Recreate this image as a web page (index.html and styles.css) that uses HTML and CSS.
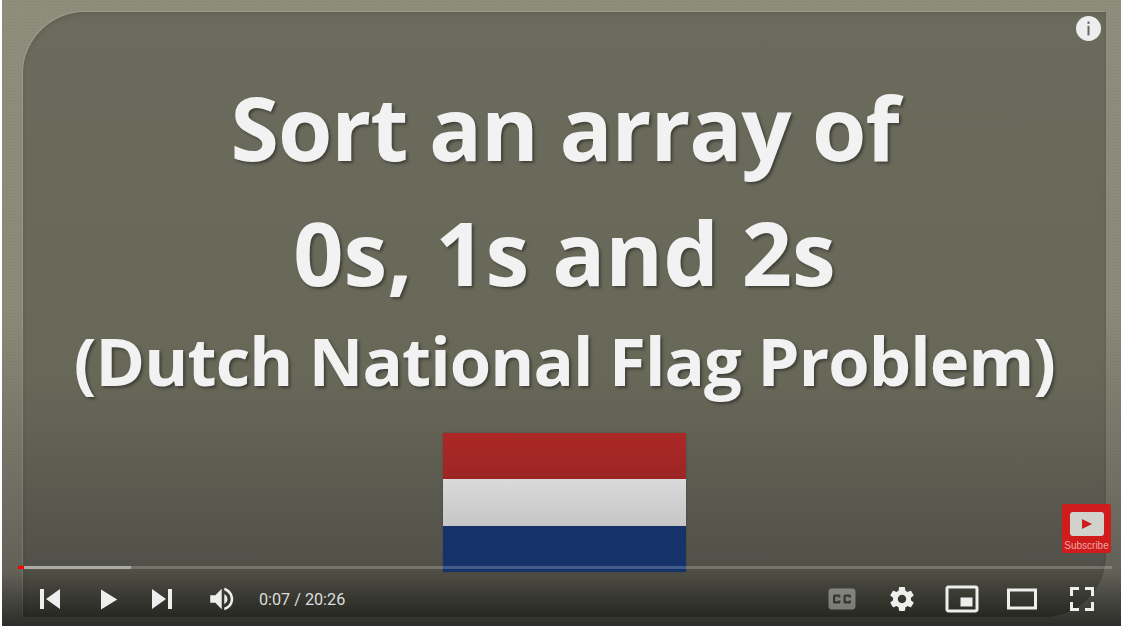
FILE: index.html
```html
<!DOCTYPE html>
<html lang="en">
<head>
    <meta charset="UTF-8">
    <meta name="viewport" content="width=device-width, initial-scale=1.0">
    <title>Sort an array of 0s, 1s and 2s</title>
    <link rel="stylesheet" href="styles.css">
</head>
<body>
    <div class="player">
        <div class="slide">
            <h1 class="slide-title first-line">Sort an array of</h1>
            <h1 class="slide-title">0s, 1s and 2s</h1>
            <h2 class="slide-subtitle">(Dutch National Flag Problem)</h2>
            <div class="flag">
                <div class="flag-red"></div>
                <div class="flag-white"></div>
                <div class="flag-blue"></div>
            </div>
        </div>

        <div class="shade"></div>

        <div class="info-button">
            <svg viewBox="0 0 25 25" width="25" height="25">
                <circle cx="12.5" cy="12.5" r="12.5" fill="#eee"/>
                <rect x="11.5" y="5.5" width="2" height="2.4" fill="#666"/>
                <rect x="11.5" y="9.8" width="2" height="9.6" fill="#666"/>
            </svg>
        </div>

        <div class="subscribe">
            <div class="subscribe-logo">
                <svg viewBox="0 0 10 10" width="10" height="10"><path d="M0 0 L10 5 L0 10 Z" fill="#d01c1c"/></svg>
            </div>
            <span class="subscribe-text">Subscribe</span>
        </div>

        <div class="controls">
            <div class="progress">
                <div class="progress-loaded"></div>
                <div class="progress-played"></div>
            </div>
            <div class="control-row">
                <div class="control-left">
                    <button class="prev-button"><svg viewBox="0 0 36 36"><path d="M12 12h2.4v12h-2.4z M15.6 18l8.4 6V12z"/></svg></button>
                    <button class="play-button"><svg viewBox="0 0 36 36"><path d="M12 26 L18.5 22 L18.5 14 L12 10 Z M18.5 22 L25 18 L18.5 14 Z"/></svg></button>
                    <button class="next-button"><svg viewBox="0 0 36 36"><path d="M12 24 L20.4 18 L12 12 V24 Z M21.6 12 v12 h2.4 V12 h-2.4 Z"/></svg></button>
                    <button class="volume-button"><svg viewBox="0 0 36 36"><path d="M8,21 L12,21 L17,26 L17,10 L12,15 L8,15 L8,21 Z M19,14 L19,22 C20.48,21.32 21.5,19.77 21.5,18 C21.5,16.26 20.48,14.74 19,14 Z M19,11.29 C21.89,12.15 24,14.83 24,18 C24,21.17 21.89,23.85 19,24.71 L19,26.77 C23.01,25.86 26,22.28 26,18 C26,13.72 23.01,10.14 19,9.23 L19,11.29 Z"/></svg></button>
                    <span class="time">0:07 / 20:26</span>
                </div>
                <div class="control-right">
                    <button class="small-button"><svg viewBox="0 0 36 36"><path fill-opacity="0.4" d="M11,11 C9.89,11 9,11.9 9,13 L9,23 C9,24.1 9.89,25 11,25 L25,25 C26.1,25 27,24.1 27,23 L27,13 C27,11.9 26.1,11 25,11 L11,11 Z M17,17 L15.5,17 L15.5,16.5 L13.5,16.5 L13.5,19.5 L15.5,19.5 L15.5,19 L17,19 L17,20 C17,20.55 16.55,21 16,21 L13,21 C12.45,21 12,20.55 12,20 L12,16 C12,15.45 12.45,15 13,15 L16,15 C16.55,15 17,15.45 17,16 L17,17 Z M24,17 L22.5,17 L22.5,16.5 L20.5,16.5 L20.5,19.5 L22.5,19.5 L22.5,19 L24,19 L24,20 C24,20.55 23.55,21 23,21 L20,21 C19.45,21 19,20.55 19,20 L19,16 C19,15.45 19.45,15 20,15 L23,15 C23.55,15 24,15.45 24,16 L24,17 Z"/></svg></button>
                    <button class="small-button"><svg viewBox="0 0 36 36"><path d="m 23.94,18.78 c .03,-0.25 .05,-0.51 .05,-0.78 0,-0.27 -0.02,-0.52 -0.05,-0.78 l 1.68,-1.32 c .15,-0.12 .19,-0.33 .09,-0.51 l -1.6,-2.76 c -0.09,-0.17 -0.31,-0.24 -0.48,-0.17 l -1.99,.8 c -0.41,-0.32 -0.86,-0.58 -1.35,-0.78 l -0.30,-2.12 c -0.02,-0.19 -0.19,-0.33 -0.39,-0.33 l -3.2,0 c -0.2,0 -0.36,.14 -0.39,.33 l -0.30,2.12 c -0.48,.2 -0.93,.47 -1.35,.78 l -1.99,-0.8 c -0.18,-0.07 -0.39,0 -0.48,.17 l -1.6,2.76 c -0.10,.17 -0.05,.39 .09,.51 l 1.68,1.32 c -0.03,.25 -0.05,.52 -0.05,.78 0,.26 .02,.52 .05,.78 l -1.68,1.32 c -0.15,.12 -0.19,.33 -0.09,.51 l 1.6,2.76 c .09,.17 .31,.24 .48,.17 l 1.99,-0.8 c .41,.32 .86,.58 1.35,.78 l .30,2.12 c .02,.19 .19,.33 .39,.33 l 3.2,0 c .2,0 .36,-0.14 .39,-0.33 l .30,-2.12 c .48,-0.2 .93,-0.47 1.35,-0.78 l 1.99,.8 c .18,.07 .39,0 .48,-0.17 l 1.6,-2.76 c .09,-0.17 .05,-0.39 -0.09,-0.51 l -1.68,-1.32 0,0 z m -5.94,2.01 c -1.54,0 -2.8,-1.25 -2.8,-2.8 0,-1.54 1.25,-2.8 2.8,-2.8 1.54,0 2.8,1.25 2.8,2.8 0,1.54 -1.25,2.8 -2.8,2.8 l 0,0 z"/></svg></button>
                    <button class="small-button"><svg viewBox="0 0 36 36"><path d="M25,17 L17,17 L17,23 L25,23 L25,17 Z M29,25 L29,10.98 C29,9.88 28.1,9 27,9 L9,9 C7.9,9 7,9.88 7,10.98 L7,25 C7,26.1 7.9,27 9,27 L27,27 C28.1,27 29,26.1 29,25 Z M27,25.02 L9,25.02 L9,10.97 L27,10.97 L27,25.02 Z"/></svg></button>
                    <button class="small-button"><svg viewBox="0 0 36 36"><path fill-rule="evenodd" d="m 28,11 0,14 -20,0 0,-14 z m -18,2 16,0 0,10 -16,0 0,-10 z"/></svg></button>
                    <button class="small-button"><svg viewBox="0 0 36 36"><path d="m 10,16 2,0 0,-4 4,0 0,-2 L 10,10 z M 20,10 l 0,2 4,0 0,4 2,0 L 26,10 z M 24,24 l -4,0 0,2 L 26,26 l 0,-6 -2,0 z M 12,20 L 10,20 L 10,26 l 6,0 0,-2 -4,0 z"/></svg></button>
                </div>
            </div>
        </div>
    </div>
</body>
</html>
```

FILE: styles.css
```css
html, body {
    margin: 0;
    height: 100%;
    background: #fff;
    overflow: hidden;
}
body {
    padding-left: 2px;
    box-sizing: border-box;
}
.player {
    position: relative;
    height: 626px;
    box-sizing: border-box;
    padding: 12px 15px 9px 21px;
    background-color: #8c8c7a;
    background-image: radial-gradient(rgba(0,0,0,0.06) 35%, transparent 40%), linear-gradient(#8e8e7c 0, #8a8a78 50%, #63635a 90%, #63635a 100%);
    background-size: 3px 3px, 100% 100%;
    overflow: hidden;
}
.slide {
    height: 100%;
    box-sizing: border-box;
    padding-top: 53px;
    background: linear-gradient(#6b6b5d 0, #686859 60%, #52524a 90%, #4a4a40 100%);
    border-radius: 62px 0 62px 0;
    box-shadow: -1px -1px 1px rgba(255,255,255,0.12), inset 0 2px 4px rgba(0,0,0,0.12);
    display: flex;
    flex-direction: column;
    align-items: center;
    font-family: "Open Sans", sans-serif;
    color: #f2f2f2;
    text-shadow: 2px 2px 3px rgba(0,0,0,0.4);
}
.slide-title {
    margin: 0;
    font-size: 88px;
    line-height: 125px;
    font-weight: 700;
}
.first-line {
    letter-spacing: -1.1px;
}
.slide-subtitle {
    margin: 0;
    font-size: 67px;
    line-height: 91px;
    font-weight: 700;
    letter-spacing: -0.9px;
}
.flag {
    width: 243px;
    margin-top: 27px;
    box-shadow: 0 0 2px rgba(0,0,0,0.2);
}
.flag-red {
    height: 46px;
    background: linear-gradient(#ac2827, #9c2524);
}
.flag-white {
    height: 47px;
    background: linear-gradient(#dadada, #c6c6c6);
}
.flag-blue {
    height: 46px;
    background: #15336a;
}
.shade {
    position: absolute;
    left: 0;
    right: 0;
    bottom: 0;
    height: 56px;
    background: linear-gradient(rgba(0,0,0,0), rgba(0,0,0,0.55));
}
.info-button {
    position: absolute;
    top: 16px;
    right: 20px;
    height: 25px;
}
.subscribe {
    position: absolute;
    top: 504px;
    right: 10px;
    width: 49px;
    height: 49px;
    border-radius: 2px;
    background: #d01c1c;
    display: flex;
    flex-direction: column;
    align-items: center;
}
.subscribe-logo {
    width: 34px;
    height: 24px;
    margin-top: 8px;
    border-radius: 3px;
    background: #d2d2cc;
    display: flex;
    align-items: center;
    justify-content: center;
}
.subscribe-text {
    margin-top: 4px;
    font-family: "Liberation Sans", sans-serif;
    font-size: 10px;
    line-height: 12px;
    color: #eea9a5;
}
.controls {
    position: absolute;
    left: 16px;
    right: 9px;
    bottom: 0;
}
.progress {
    position: relative;
    height: 3px;
    margin-bottom: 3px;
    background: rgba(255,255,255,0.2);
}
.progress-loaded {
    position: absolute;
    left: 0;
    top: 0;
    width: 113px;
    height: 3px;
    background: rgba(255,255,255,0.4);
}
.progress-played {
    position: absolute;
    left: 0;
    top: 0;
    width: 6px;
    height: 3px;
    background: #f00;
}
.control-row {
    display: flex;
    justify-content: space-between;
    align-items: center;
    height: 54px;
}
.control-left {
    display: flex;
    align-items: center;
    padding-left: 4px;
}
.control-right {
    display: flex;
    align-items: center;
}
button {
    padding: 0;
    border: none;
    background: none;
    display: flex;
    justify-content: center;
}
button svg {
    fill: #eee;
    flex: none;
}
.prev-button {
    width: 56px;
}
.prev-button svg, .next-button svg {
    width: 60px;
    height: 60px;
}
.play-button {
    width: 60px;
}
.play-button svg {
    width: 45px;
    height: 45px;
}
.next-button {
    width: 48px;
}
.volume-button {
    width: 73px;
}
.volume-button svg {
    width: 46px;
    height: 46px;
}
.small-button {
    width: 60px;
}
.small-button svg {
    width: 54px;
    height: 54px;
}
.time {
    font-family: "Roboto", sans-serif;
    font-size: 16.2px;
    color: #ddd;
    white-space: nowrap;
}
```
